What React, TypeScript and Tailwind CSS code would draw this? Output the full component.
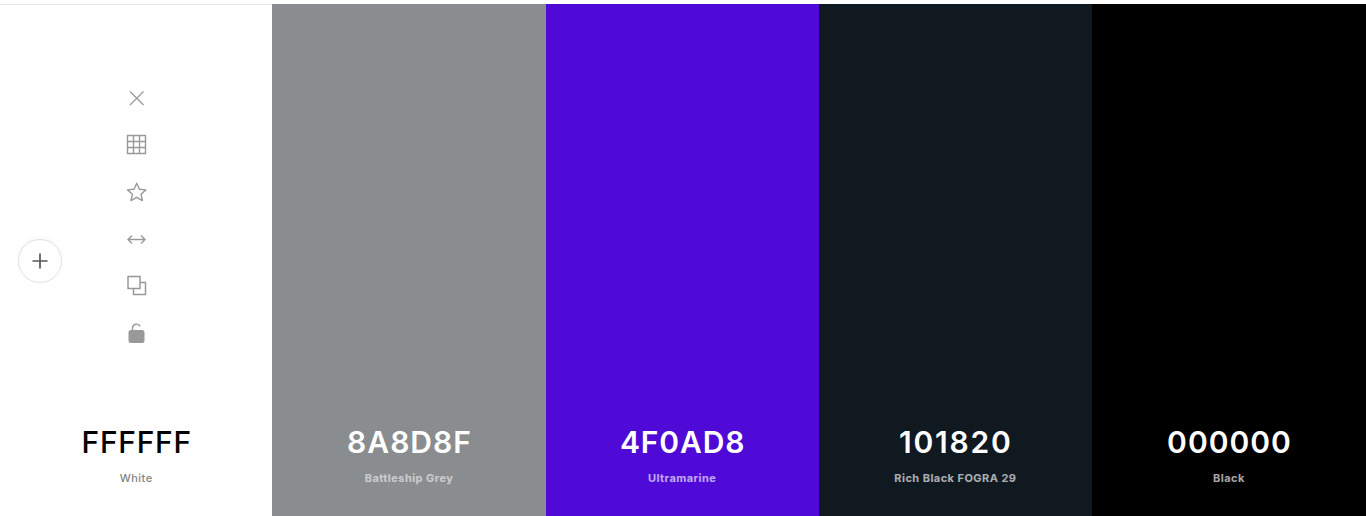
const colors = [
  { hex: "FFFFFF", name: "White", bg: "bg-white w-[272.4px]", text: "text-black font-medium tracking-[0.7px]", sub: "text-[#858585] font-medium" },
  { hex: "8A8D8F", name: "Battleship Grey", bg: "bg-[#8a8d8f] w-[273.2px]", text: "text-white font-semibold tracking-[1px]", sub: "text-white/55 font-bold" },
  { hex: "4F0AD8", name: "Ultramarine", bg: "bg-[#4f0ad8] w-[273.2px]", text: "text-white font-semibold tracking-[0.9px]", sub: "text-white/65 font-bold" },
  { hex: "101820", name: "Rich Black FOGRA 29", bg: "bg-[#101820] w-[273.2px]", text: "text-white font-semibold tracking-[1.8px]", sub: "text-white/65 font-bold" },
  { hex: "000000", name: "Black", bg: "bg-black flex-1", text: "text-white font-semibold tracking-[1px]", sub: "text-white/65 font-bold" },
];

function Tools() {
  return (
    <div className="flex flex-col items-center gap-[23px] pl-[2px] text-[#999999]">
      <svg width="24" height="24" viewBox="0 0 24 24" fill="none" stroke="currentColor" strokeWidth="1.3">
        <path d="M5 5.5 18.5 19M18.5 5.5 5 19" />
      </svg>
      <svg width="24" height="24" viewBox="0 0 24 24" fill="none" stroke="currentColor" strokeWidth="1.4">
        <path d="M2.5 2.5h18v18h-18zM2.5 8.5h18M2.5 14.5h18M8.5 2.5v18M14.5 2.5v18" />
      </svg>
      <svg width="24" height="24" viewBox="0 0 24 24" fill="none" stroke="currentColor" strokeWidth="1.4" strokeLinejoin="round">
        <path d="M11.7 3.2l2.7 6 6.5.7-4.9 4.3 1.4 6.4-5.7-3.3-5.7 3.3 1.4-6.4-4.9-4.3 6.5-.7z" />
      </svg>
      <svg width="24" height="24" viewBox="0 0 24 24" fill="none" stroke="currentColor" strokeWidth="1.4">
        <path d="M3 12.5h17M7 8.5l-4 4 4 4M16 8.5l4 4-4 4" />
      </svg>
      <svg width="24" height="24" viewBox="0 0 24 24" fill="none" stroke="currentColor" strokeWidth="1.5">
        <path d="M3 2.5h12v12H3zM15 8.5h5.5v12h-12v-6" />
      </svg>
      <svg width="24" height="24" viewBox="0 0 24 24" fill="none">
        <path d="M7.5 9.5V7a4 4 0 0 1 7.6-1.6" stroke="currentColor" strokeWidth="1.4" />
        <rect x="3.5" y="9" width="16" height="13" rx="2.5" fill="currentColor" />
      </svg>
    </div>
  );
}

export default function App() {
  return (
    <div className="h-[516px] w-full overflow-hidden bg-white font-['Inter',sans-serif] antialiased">
      <div className="flex h-full flex-col pt-1">
        <div className="flex flex-1">
          {colors.map((c, i) => (
            <div
              key={c.hex}
              className={`relative flex flex-col items-center pb-[31px] ${c.bg} ${i === 0 ? "border-t border-[#e6e6e6]" : ""}`}
            >
              {i === 0 && (
                <>
                  <div className="mt-[81px]">
                    <Tools />
                  </div>
                  <button className="absolute left-[18px] top-[234px] flex h-11 w-11 items-center justify-center rounded-full border border-[#e2e2e2] bg-white text-[#55555c] shadow-[0_-2px_6px_rgba(0,0,0,0.03)]">
                    <svg width="20" height="20" viewBox="0 0 20 20" fill="none" stroke="currentColor" strokeWidth="1.7">
                      <path d="M10 2.5v15M2.5 10h15" />
                    </svg>
                  </button>
                </>
              )}
              <div className="mt-auto flex flex-col items-center">
                <div className={`pl-[1px] text-[30px] leading-[36px] ${c.text}`}>{c.hex}</div>
                <div className={`mt-[11px] text-[11px] leading-[14px] tracking-[0.45px] ${c.sub}`}>{c.name}</div>
              </div>
            </div>
          ))}
        </div>
      </div>
    </div>
  );
}
